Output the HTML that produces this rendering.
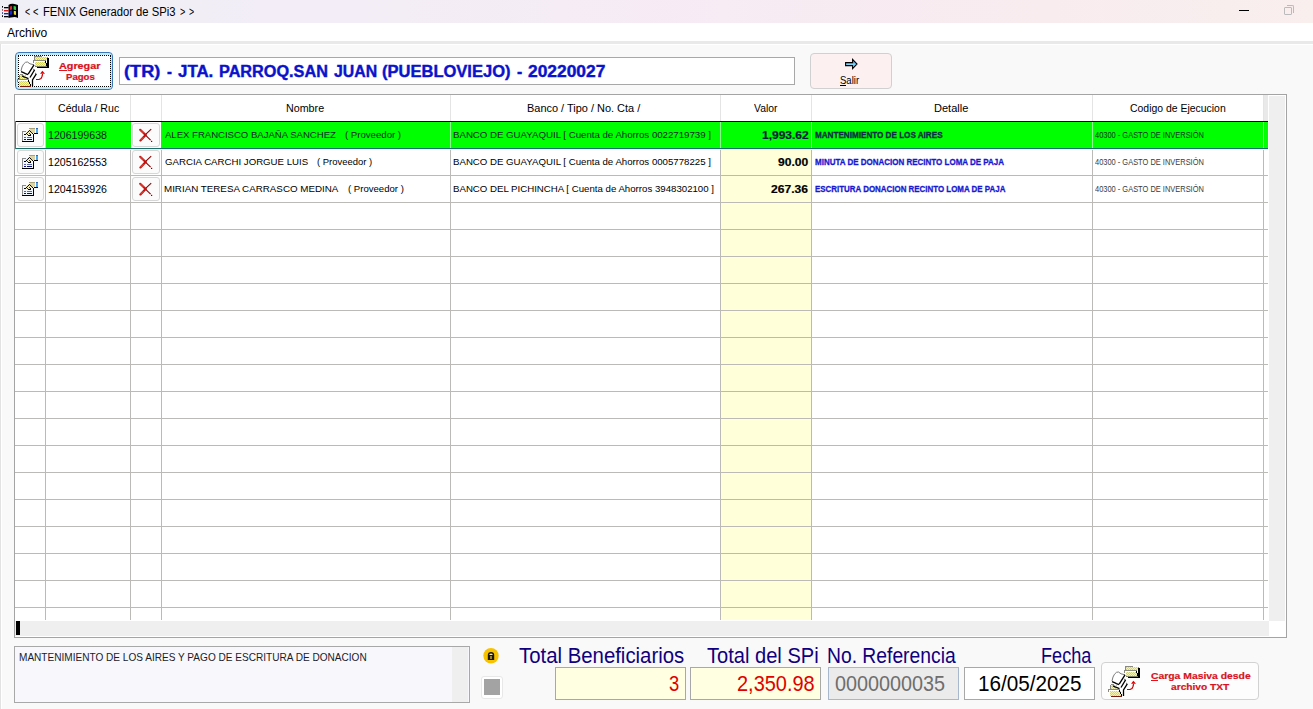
<!DOCTYPE html>
<html><head><meta charset="utf-8">
<style>
*{margin:0;padding:0;box-sizing:border-box}
html,body{width:1313px;height:709px;overflow:hidden;background:#f9f9f9;font-family:"Liberation Sans",sans-serif}
body{position:relative}
.a{position:absolute}
.tx{position:absolute;white-space:nowrap;transform-origin:0 0}
.btn{position:absolute;border:1px solid #d6d6d6;border-radius:3px;background:#fbfbfb}
</style></head><body>
<svg width="0" height="0" style="position:absolute">
<defs>
<pattern id="chk" width="2" height="2" patternUnits="userSpaceOnUse"><rect width="2" height="2" fill="#f4f4b0"/><rect width="1" height="1" fill="#d8d860"/><rect x="1" y="1" width="1" height="1" fill="#d8d860"/></pattern>



</defs></svg>

<!-- title bar -->
<div class="a" style="left:0;top:0;width:1313px;height:23px;background:linear-gradient(90deg,#f0eff6 0%,#f3edf6 30%,#f7ebf4 55%,#f8ecef 80%,#f9efed 100%)"></div>
<svg class="a" style="left:0;top:2px" width="20" height="18" viewBox="0 0 20 18">
 <path d="M8.5 3 Q10.5 1.5 13 1.8 Q15.5 2 18 3 V16 Q15.5 14.8 13 15.2 Q10.5 15.4 8.5 16 Z" fill="#000"/>
 <path d="M9.8 4.5 L12 4 V7.6 L9.8 8 Z" fill="#e02828"/>
 <path d="M13.6 4 L16 4.6 V8.2 L13.6 7.6 Z" fill="#30d040"/>
 <path d="M9.8 8.8 L12.2 8.6 V12.4 L9.8 12.8 Z" fill="#1428d8"/>
 <path d="M13.8 8.8 L16 9.2 V13 L13.8 12.6 Z" fill="#f0e020"/>
 <rect x="2" y="4" width="1" height="1.6" fill="#000"/>
 <rect x="2" y="7.2" width="1" height="1.5" fill="#8a4040"/>
 <rect x="2" y="10.3" width="1" height="1.5" fill="#203090"/>
 <rect x="2" y="13.3" width="1" height="1.6" fill="#000"/>
 <rect x="4" y="5" width="4.6" height="1.3" fill="#000"/>
 <rect x="4" y="8" width="4.6" height="1.4" fill="#d81818"/>
 <rect x="4" y="11" width="4.6" height="1.4" fill="#1424b0"/>
 <rect x="4" y="14" width="4.6" height="1.3" fill="#000"/>
</svg>
<div class="a" style="left:1239px;top:10px;width:10px;height:1px;background:#000"></div>
<div class="a" style="left:1284px;top:7px;width:8px;height:8px;border:1px solid #bbb;border-radius:1px"></div>
<div class="a" style="left:1287px;top:5px;width:7px;height:8px;border-top:1px solid #bbb;border-right:1px solid #bbb;border-radius:0 2px 0 0"></div>
<!-- menu -->
<div class="a" style="left:0;top:23px;width:1313px;height:18px;background:#fff"></div>
<div class="a" style="left:0;top:41px;width:1313px;height:3px;background:#e9e9e9"></div>
<div class="a" style="left:0;top:44px;width:1313px;height:1px;background:#fff"></div>
<div class="a" style="left:0;top:44px;width:1px;height:665px;background:#e2e2e2"></div>
<div class="a" style="left:1px;top:44px;width:1px;height:665px;background:#fff"></div>

<!-- Agregar button -->
<div class="a" style="left:15px;top:52px;width:98px;height:38px;border:1px solid #3a78b8;border-radius:4px;background:#fcfeff;box-shadow:inset 0 0 0 2px #c0eafa"></div>
<div class="a" style="left:18px;top:55px;width:93px;height:32px;border:1px dotted #000"></div>
<svg class="a" style="left:16px;top:54px" width="34" height="34" viewBox="0 0 34 34">
 <g shape-rendering="crispEdges">
 <!-- bottom folder back -->
 <rect x="4" y="20" width="3" height="1" fill="#8a8a80"/>
 <rect x="3" y="21" width="1" height="5" fill="#8a8a80"/>
 <rect x="4" y="21" width="6" height="4" fill="url(#chk)"/>
 </g>
 <!-- papers -->
 <path d="M5 16.5 L6 13 L7.5 10.2 L9.5 8.3 L11.5 8 L14 9.8 L18 10.8 L12.2 20.2 L9.5 19.6 L5 17.6 Z" fill="#fff"/>
 <path d="M12.2 20.2 L18.6 15.8 L20.3 19.8 L16.5 31 L13 26 L8 23.5 Z" fill="#fff"/>
 <path d="M5 17 L6 13 L7.5 10.2 L9.5 8.3 L11.5 8 L14 9.8 L18 10.8" fill="none" stroke="#7a7a7a" stroke-width="1"/>
 <path d="M18 10.8 L12.2 20.2 M5 17.6 L7.5 18.6 L9.5 19.6 L12 20.6" fill="none" stroke="#000" stroke-width="1.3"/>
 <path d="M17 15.2 L18.6 15.8" stroke="#7a7a7a" stroke-width="1"/>
 <path d="M18.6 15.8 L14 23.5" fill="none" stroke="#000" stroke-width="1.3"/>
 <path d="M6 21.8 L8 22.8 L10 23.6 L12.5 24.6" fill="none" stroke="#000" stroke-width="1.3"/>
 <path d="M19 19 L20.3 19.8" stroke="#7a7a7a" stroke-width="1"/>
 <path d="M20.3 19.8 L16.5 26 L16.5 32" fill="none" stroke="#000" stroke-width="1.3"/>
 <g shape-rendering="crispEdges">
 <!-- top right folder -->
 <rect x="31" y="4" width="2" height="10" fill="#000"/>
 <rect x="21" y="13" width="12" height="1" fill="#000"/>
 <rect x="18" y="2" width="8" height="1" fill="#8a8a80"/>
 <rect x="18" y="2" width="1" height="5" fill="#8a8a80"/>
 <rect x="26" y="3" width="6" height="1" fill="#8a8a80"/>
 <rect x="19" y="3" width="12" height="3" fill="url(#chk)"/>
 <rect x="17" y="6" width="13" height="1" fill="#8a8a80"/>
 <rect x="17" y="6" width="1" height="3" fill="#8a8a80"/>
 <rect x="18" y="7" width="11" height="1" fill="#fff"/>
 <rect x="19" y="8" width="11" height="4" fill="url(#chk)"/>
 <rect x="19" y="12" width="12" height="1" fill="#80806a"/>
 <rect x="29" y="7" width="1" height="2" fill="#000"/>
 <rect x="30" y="9" width="1" height="3" fill="#000"/>
 <!-- bottom folder front -->
 <rect x="1" y="25" width="12" height="1" fill="#8a8a80"/>
 <rect x="1" y="25" width="1" height="3" fill="#8a8a80"/>
 <rect x="2" y="26" width="10" height="1" fill="#fff"/>
 <rect x="3" y="27" width="11" height="5" fill="url(#chk)"/>
 <rect x="12" y="26" width="1" height="2" fill="#000"/>
 <rect x="13" y="28" width="1" height="2" fill="#000"/>
 <rect x="14" y="30" width="1" height="3" fill="#000"/>
 <rect x="4" y="32" width="11" height="1" fill="#7a1a10"/>
 </g>
 <!-- red arrow -->
 <path d="M20 25.5 H23 L25 24.5 L26 22.5 L26.6 20" fill="none" stroke="#c80000" stroke-width="1.2"/>
 <path d="M26.4 16.8 L29 19.8 L24 19.8 Z" fill="#e00000"/>
</svg>
<div class="a" style="left:59px;top:70px;width:8px;height:1px;background:#e0141e"></div>

<!-- title textbox -->
<div class="a" style="left:119px;top:57px;width:676px;height:28px;border:1px solid #a8a8a8;background:#fff"></div>

<!-- Salir -->
<div class="a" style="left:810px;top:53px;width:82px;height:36px;border:1px solid #d0d0d0;border-radius:4px;background:#fcf0f0"></div>
<svg class="a" style="left:842px;top:56px" width="18" height="16" viewBox="0 0 18 16">
 <defs><linearGradient id="ag" x1="0" y1="0" x2="0" y2="1"><stop offset="0" stop-color="#3a8ee0"/><stop offset="0.55" stop-color="#7ad4f8"/><stop offset="1" stop-color="#b8f4ff"/></linearGradient></defs>
 <path d="M3.6 6.6 H10.6 V3.4 L15 8 L10.6 12.6 V9.6 H3.6 Z" fill="url(#ag)" stroke="#000" stroke-width="1.1" stroke-linejoin="miter"/>
</svg>
<div class="a" style="left:840px;top:85px;width:6px;height:1px;background:#000"></div>

<!-- GRID -->
<div class="a" style="left:14px;top:94px;width:1273px;height:544px;border:1px solid #a4a4a4;background:#fff"></div>
<div class="a" style="left:721px;top:149px;width:90px;height:471px;background:#ffffda"></div>
<div class="a" style="left:45px;top:95px;width:1px;height:26px;background:#e4e4e4"></div>
<div class="a" style="left:130px;top:95px;width:1px;height:26px;background:#e4e4e4"></div>
<div class="a" style="left:161px;top:95px;width:1px;height:26px;background:#e4e4e4"></div>
<div class="a" style="left:450px;top:95px;width:1px;height:26px;background:#e4e4e4"></div>
<div class="a" style="left:720px;top:95px;width:1px;height:26px;background:#e4e4e4"></div>
<div class="a" style="left:811px;top:95px;width:1px;height:26px;background:#e4e4e4"></div>
<div class="a" style="left:1092px;top:95px;width:1px;height:26px;background:#e4e4e4"></div>
<div class="a" style="left:1263px;top:95px;width:1px;height:26px;background:#e4e4e4"></div>
<div class="a" style="left:1264px;top:95px;width:4px;height:26px;background:#e9e9e9"></div>
<div class="a" style="left:45px;top:121px;width:1px;height:499px;background:#bcbab6"></div>
<div class="a" style="left:130px;top:121px;width:1px;height:499px;background:#bcbab6"></div>
<div class="a" style="left:161px;top:121px;width:1px;height:499px;background:#bcbab6"></div>
<div class="a" style="left:450px;top:121px;width:1px;height:499px;background:#bcbab6"></div>
<div class="a" style="left:720px;top:121px;width:1px;height:499px;background:#bcbab6"></div>
<div class="a" style="left:811px;top:121px;width:1px;height:499px;background:#bcbab6"></div>
<div class="a" style="left:1092px;top:121px;width:1px;height:499px;background:#bcbab6"></div>
<div class="a" style="left:1263px;top:121px;width:1px;height:499px;background:#bcbab6"></div>
<div class="a" style="left:15px;top:148px;width:1253px;height:1px;background:#bcbab6"></div>
<div class="a" style="left:15px;top:175px;width:1253px;height:1px;background:#bcbab6"></div>
<div class="a" style="left:15px;top:202px;width:1253px;height:1px;background:#bcbab6"></div>
<div class="a" style="left:15px;top:229px;width:1253px;height:1px;background:#bcbab6"></div>
<div class="a" style="left:15px;top:256px;width:1253px;height:1px;background:#bcbab6"></div>
<div class="a" style="left:15px;top:283px;width:1253px;height:1px;background:#bcbab6"></div>
<div class="a" style="left:15px;top:310px;width:1253px;height:1px;background:#bcbab6"></div>
<div class="a" style="left:15px;top:337px;width:1253px;height:1px;background:#bcbab6"></div>
<div class="a" style="left:15px;top:364px;width:1253px;height:1px;background:#bcbab6"></div>
<div class="a" style="left:15px;top:391px;width:1253px;height:1px;background:#bcbab6"></div>
<div class="a" style="left:15px;top:418px;width:1253px;height:1px;background:#bcbab6"></div>
<div class="a" style="left:15px;top:445px;width:1253px;height:1px;background:#bcbab6"></div>
<div class="a" style="left:15px;top:472px;width:1253px;height:1px;background:#bcbab6"></div>
<div class="a" style="left:15px;top:499px;width:1253px;height:1px;background:#bcbab6"></div>
<div class="a" style="left:15px;top:526px;width:1253px;height:1px;background:#bcbab6"></div>
<div class="a" style="left:15px;top:553px;width:1253px;height:1px;background:#bcbab6"></div>
<div class="a" style="left:15px;top:580px;width:1253px;height:1px;background:#bcbab6"></div>
<div class="a" style="left:15px;top:607px;width:1253px;height:1px;background:#bcbab6"></div>
<div class="a" style="left:15px;top:122px;width:1253px;height:26px;background:#00ff00"></div>
<div class="a" style="left:15px;top:121px;width:1253px;height:1px;background:#000"></div>
<div class="a" style="left:15px;top:148px;width:1253px;height:1px;background:#1a6e6a"></div>
<div class="a" style="left:15px;top:121px;width:1px;height:28px;background:#3c78b4"></div>
<div class="a" style="left:450px;top:122px;width:1px;height:26px;background:#90f890"></div>
<div class="a" style="left:720px;top:122px;width:1px;height:26px;background:#90f890"></div>
<div class="a" style="left:811px;top:122px;width:1px;height:26px;background:#90f890"></div>
<div class="a" style="left:1092px;top:122px;width:1px;height:26px;background:#90f890"></div>
<div class="a" style="left:1263px;top:122px;width:1px;height:26px;background:#90f890"></div>
<div class="a" style="left:45px;top:122px;width:1px;height:26px;background:#c8dcc8"></div>
<div class="a" style="left:15px;top:149px;width:1253px;height:1px;background:#e4f2f6"></div>
<div class="a" style="left:16px;top:122px;width:29px;height:26px;background:#fff"></div>
<div class="a" style="left:131px;top:122px;width:30px;height:26px;background:#fff"></div>
<div class="btn" style="left:17px;top:123px;width:27px;height:24px"></div>
<div class="btn" style="left:132px;top:123px;width:28px;height:24px"></div>
<svg class="a" style="left:21px;top:127px" width="17" height="16" viewBox="0 0 17 16">
 <g shape-rendering="crispEdges">
 <rect x="1" y="4" width="11" height="10" fill="#f2f8ff"/>
 <rect x="1" y="4" width="4" height="1" fill="#8c8c8c"/>
 <rect x="1" y="4" width="1" height="10" fill="#8c8c8c"/>
 <rect x="1" y="14" width="12" height="1" fill="#000"/>
 <rect x="12" y="7" width="1" height="8" fill="#000"/>
 <rect x="3" y="10" width="2" height="1" fill="#5a5ab0"/>
 <rect x="6" y="10" width="5" height="1" fill="#5a6aa8"/>
 <rect x="3" y="12" width="2" height="1" fill="#0c0c78"/>
 <rect x="6" y="12" width="5" height="1" fill="#0c0c78"/>
 <rect x="8" y="1" width="6" height="1" fill="#a8a078"/>
 <rect x="9" y="2" width="5" height="4" fill="#dcd4a4"/>
 <rect x="15" y="1" width="2" height="5" fill="#4aa8ec"/>
 <rect x="15" y="1" width="2" height="1" fill="#2a6ab8"/>
 <rect x="13" y="6" width="4" height="1" fill="#000"/>
 <path fill="#f0ecc0" d="M3 7.5 L8 2.5 L12 6 L9 8.5 Z"/>
 <rect x="3" y="7" width="2" height="1" fill="#000"/>
 <rect x="5" y="6" width="1" height="1" fill="#000"/><rect x="6" y="5" width="1" height="1" fill="#222"/>
 <rect x="7" y="4" width="1" height="1" fill="#000"/><rect x="8" y="3" width="1" height="1" fill="#222"/>
 <rect x="9" y="4" width="1" height="1" fill="#000"/><rect x="10" y="5" width="1" height="1" fill="#222"/>
 <rect x="11" y="6" width="1" height="1" fill="#000"/>
 <rect x="6" y="7" width="1" height="1" fill="#333"/><rect x="8" y="6" width="1" height="1" fill="#333"/>
 <rect x="7" y="8" width="1" height="1" fill="#000"/><rect x="9" y="7" width="1" height="1" fill="#000"/>
 <rect x="8" y="8" width="2" height="1" fill="#000"/>
 </g>
</svg>
<svg class="a" style="left:138px;top:128px" width="15" height="14" viewBox="0 0 15 14">
 <path d="M7.2 6.8 L12.6 12.2" stroke="#8a0000" stroke-width="1.1"/>
 <rect x="13" y="12.8" width="1.2" height="1.2" fill="#7a0000"/>
 <path d="M7.4 6.6 L13.2 1.2" stroke="#8a0000" stroke-width="1.1"/>
 <path d="M2.2 1.8 L7.6 7" stroke="#c01010" stroke-width="2.2" stroke-linecap="round"/>
 <path d="M7.6 7 L2.4 12.4" stroke="#c01010" stroke-width="2.2" stroke-linecap="round"/>
 <path d="M2.4 1.9 L5.5 5" stroke="#ff6a4a" stroke-width="0.8" stroke-linecap="round"/>
 <path d="M2.6 12 L5.2 9.4" stroke="#ff6a4a" stroke-width="0.8" stroke-linecap="round"/>
</svg>
<div class="btn" style="left:17px;top:150px;width:27px;height:24px"></div>
<div class="btn" style="left:132px;top:150px;width:28px;height:24px"></div>
<svg class="a" style="left:21px;top:154px" width="17" height="16" viewBox="0 0 17 16">
 <g shape-rendering="crispEdges">
 <rect x="1" y="4" width="11" height="10" fill="#f2f8ff"/>
 <rect x="1" y="4" width="4" height="1" fill="#8c8c8c"/>
 <rect x="1" y="4" width="1" height="10" fill="#8c8c8c"/>
 <rect x="1" y="14" width="12" height="1" fill="#000"/>
 <rect x="12" y="7" width="1" height="8" fill="#000"/>
 <rect x="3" y="10" width="2" height="1" fill="#5a5ab0"/>
 <rect x="6" y="10" width="5" height="1" fill="#5a6aa8"/>
 <rect x="3" y="12" width="2" height="1" fill="#0c0c78"/>
 <rect x="6" y="12" width="5" height="1" fill="#0c0c78"/>
 <rect x="8" y="1" width="6" height="1" fill="#a8a078"/>
 <rect x="9" y="2" width="5" height="4" fill="#dcd4a4"/>
 <rect x="15" y="1" width="2" height="5" fill="#4aa8ec"/>
 <rect x="15" y="1" width="2" height="1" fill="#2a6ab8"/>
 <rect x="13" y="6" width="4" height="1" fill="#000"/>
 <path fill="#f0ecc0" d="M3 7.5 L8 2.5 L12 6 L9 8.5 Z"/>
 <rect x="3" y="7" width="2" height="1" fill="#000"/>
 <rect x="5" y="6" width="1" height="1" fill="#000"/><rect x="6" y="5" width="1" height="1" fill="#222"/>
 <rect x="7" y="4" width="1" height="1" fill="#000"/><rect x="8" y="3" width="1" height="1" fill="#222"/>
 <rect x="9" y="4" width="1" height="1" fill="#000"/><rect x="10" y="5" width="1" height="1" fill="#222"/>
 <rect x="11" y="6" width="1" height="1" fill="#000"/>
 <rect x="6" y="7" width="1" height="1" fill="#333"/><rect x="8" y="6" width="1" height="1" fill="#333"/>
 <rect x="7" y="8" width="1" height="1" fill="#000"/><rect x="9" y="7" width="1" height="1" fill="#000"/>
 <rect x="8" y="8" width="2" height="1" fill="#000"/>
 </g>
</svg>
<svg class="a" style="left:138px;top:155px" width="15" height="14" viewBox="0 0 15 14">
 <path d="M7.2 6.8 L12.6 12.2" stroke="#8a0000" stroke-width="1.1"/>
 <rect x="13" y="12.8" width="1.2" height="1.2" fill="#7a0000"/>
 <path d="M7.4 6.6 L13.2 1.2" stroke="#8a0000" stroke-width="1.1"/>
 <path d="M2.2 1.8 L7.6 7" stroke="#c01010" stroke-width="2.2" stroke-linecap="round"/>
 <path d="M7.6 7 L2.4 12.4" stroke="#c01010" stroke-width="2.2" stroke-linecap="round"/>
 <path d="M2.4 1.9 L5.5 5" stroke="#ff6a4a" stroke-width="0.8" stroke-linecap="round"/>
 <path d="M2.6 12 L5.2 9.4" stroke="#ff6a4a" stroke-width="0.8" stroke-linecap="round"/>
</svg>
<div class="btn" style="left:17px;top:177px;width:27px;height:24px"></div>
<div class="btn" style="left:132px;top:177px;width:28px;height:24px"></div>
<svg class="a" style="left:21px;top:181px" width="17" height="16" viewBox="0 0 17 16">
 <g shape-rendering="crispEdges">
 <rect x="1" y="4" width="11" height="10" fill="#f2f8ff"/>
 <rect x="1" y="4" width="4" height="1" fill="#8c8c8c"/>
 <rect x="1" y="4" width="1" height="10" fill="#8c8c8c"/>
 <rect x="1" y="14" width="12" height="1" fill="#000"/>
 <rect x="12" y="7" width="1" height="8" fill="#000"/>
 <rect x="3" y="10" width="2" height="1" fill="#5a5ab0"/>
 <rect x="6" y="10" width="5" height="1" fill="#5a6aa8"/>
 <rect x="3" y="12" width="2" height="1" fill="#0c0c78"/>
 <rect x="6" y="12" width="5" height="1" fill="#0c0c78"/>
 <rect x="8" y="1" width="6" height="1" fill="#a8a078"/>
 <rect x="9" y="2" width="5" height="4" fill="#dcd4a4"/>
 <rect x="15" y="1" width="2" height="5" fill="#4aa8ec"/>
 <rect x="15" y="1" width="2" height="1" fill="#2a6ab8"/>
 <rect x="13" y="6" width="4" height="1" fill="#000"/>
 <path fill="#f0ecc0" d="M3 7.5 L8 2.5 L12 6 L9 8.5 Z"/>
 <rect x="3" y="7" width="2" height="1" fill="#000"/>
 <rect x="5" y="6" width="1" height="1" fill="#000"/><rect x="6" y="5" width="1" height="1" fill="#222"/>
 <rect x="7" y="4" width="1" height="1" fill="#000"/><rect x="8" y="3" width="1" height="1" fill="#222"/>
 <rect x="9" y="4" width="1" height="1" fill="#000"/><rect x="10" y="5" width="1" height="1" fill="#222"/>
 <rect x="11" y="6" width="1" height="1" fill="#000"/>
 <rect x="6" y="7" width="1" height="1" fill="#333"/><rect x="8" y="6" width="1" height="1" fill="#333"/>
 <rect x="7" y="8" width="1" height="1" fill="#000"/><rect x="9" y="7" width="1" height="1" fill="#000"/>
 <rect x="8" y="8" width="2" height="1" fill="#000"/>
 </g>
</svg>
<svg class="a" style="left:138px;top:182px" width="15" height="14" viewBox="0 0 15 14">
 <path d="M7.2 6.8 L12.6 12.2" stroke="#8a0000" stroke-width="1.1"/>
 <rect x="13" y="12.8" width="1.2" height="1.2" fill="#7a0000"/>
 <path d="M7.4 6.6 L13.2 1.2" stroke="#8a0000" stroke-width="1.1"/>
 <path d="M2.2 1.8 L7.6 7" stroke="#c01010" stroke-width="2.2" stroke-linecap="round"/>
 <path d="M7.6 7 L2.4 12.4" stroke="#c01010" stroke-width="2.2" stroke-linecap="round"/>
 <path d="M2.4 1.9 L5.5 5" stroke="#ff6a4a" stroke-width="0.8" stroke-linecap="round"/>
 <path d="M2.6 12 L5.2 9.4" stroke="#ff6a4a" stroke-width="0.8" stroke-linecap="round"/>
</svg>
<div class="a" style="left:1269px;top:96px;width:16px;height:525px;background:#efefef"></div>
<div class="a" style="left:15px;top:621px;width:1254px;height:15px;background:#efefef"></div>
<div class="a" style="left:16px;top:621px;width:4px;height:14px;background:#000"></div>

<!-- bottom description -->
<div class="a" style="left:14px;top:646px;width:456px;height:57px;border:1px solid #a8a8a8;background:#f8f8fc"></div>
<div class="a" style="left:452px;top:647px;width:16px;height:55px;background:#efefef"></div>
<!-- lock -->
<svg class="a" style="left:482px;top:647px" width="18" height="18" viewBox="0 0 18 18">
 <circle cx="9" cy="8.7" r="7.7" fill="#f7c300"/>
 <path d="M5.8 13 V8 Q5.8 5 9 5 Q12.2 5 12.2 8 V13 Z" fill="#1e1800"/>
 <path d="M7.2 8 Q7.4 6.4 9 6.4 Q10.6 6.4 10.8 8 Z" fill="#f4eec0"/>
 <rect x="8.3" y="9" width="1.4" height="3" fill="#c8b050"/>
</svg>
<div class="a" style="left:481px;top:676px;width:22px;height:23px;border:1px solid #e8e8e8;border-radius:3px;background:#fff"></div>
<div class="a" style="left:484px;top:679px;width:16px;height:16px;background:#a3a3a3"></div>
<!-- fields -->
<div class="a" style="left:555px;top:667px;width:131px;height:33px;border:1px solid #a8a8a8;background:#ffffe1"></div>
<div class="a" style="left:690px;top:667px;width:131px;height:33px;border:1px solid #a8a8a8;background:#ffffe1"></div>
<div class="a" style="left:828px;top:667px;width:131px;height:33px;border:1px solid #a8b8cc;background:#ebebeb"></div>
<div class="a" style="left:964px;top:667px;width:131px;height:33px;border:1px solid #a8a8a8;background:#fff"></div>
<!-- Carga masiva -->
<div class="a" style="left:1101px;top:662px;width:158px;height:38px;border:1px solid #d2d2d2;border-radius:4px;background:#fdfdfd"></div>
<svg class="a" style="left:1107px;top:664px" width="34" height="34" viewBox="0 0 34 34">
 <g shape-rendering="crispEdges">
 <!-- bottom folder back -->
 <rect x="4" y="20" width="3" height="1" fill="#8a8a80"/>
 <rect x="3" y="21" width="1" height="5" fill="#8a8a80"/>
 <rect x="4" y="21" width="6" height="4" fill="url(#chk)"/>
 </g>
 <!-- papers -->
 <path d="M5 16.5 L6 13 L7.5 10.2 L9.5 8.3 L11.5 8 L14 9.8 L18 10.8 L12.2 20.2 L9.5 19.6 L5 17.6 Z" fill="#fff"/>
 <path d="M12.2 20.2 L18.6 15.8 L20.3 19.8 L16.5 31 L13 26 L8 23.5 Z" fill="#fff"/>
 <path d="M5 17 L6 13 L7.5 10.2 L9.5 8.3 L11.5 8 L14 9.8 L18 10.8" fill="none" stroke="#7a7a7a" stroke-width="1"/>
 <path d="M18 10.8 L12.2 20.2 M5 17.6 L7.5 18.6 L9.5 19.6 L12 20.6" fill="none" stroke="#000" stroke-width="1.3"/>
 <path d="M17 15.2 L18.6 15.8" stroke="#7a7a7a" stroke-width="1"/>
 <path d="M18.6 15.8 L14 23.5" fill="none" stroke="#000" stroke-width="1.3"/>
 <path d="M6 21.8 L8 22.8 L10 23.6 L12.5 24.6" fill="none" stroke="#000" stroke-width="1.3"/>
 <path d="M19 19 L20.3 19.8" stroke="#7a7a7a" stroke-width="1"/>
 <path d="M20.3 19.8 L16.5 26 L16.5 32" fill="none" stroke="#000" stroke-width="1.3"/>
 <g shape-rendering="crispEdges">
 <!-- top right folder -->
 <rect x="31" y="4" width="2" height="10" fill="#000"/>
 <rect x="21" y="13" width="12" height="1" fill="#000"/>
 <rect x="18" y="2" width="8" height="1" fill="#8a8a80"/>
 <rect x="18" y="2" width="1" height="5" fill="#8a8a80"/>
 <rect x="26" y="3" width="6" height="1" fill="#8a8a80"/>
 <rect x="19" y="3" width="12" height="3" fill="url(#chk)"/>
 <rect x="17" y="6" width="13" height="1" fill="#8a8a80"/>
 <rect x="17" y="6" width="1" height="3" fill="#8a8a80"/>
 <rect x="18" y="7" width="11" height="1" fill="#fff"/>
 <rect x="19" y="8" width="11" height="4" fill="url(#chk)"/>
 <rect x="19" y="12" width="12" height="1" fill="#80806a"/>
 <rect x="29" y="7" width="1" height="2" fill="#000"/>
 <rect x="30" y="9" width="1" height="3" fill="#000"/>
 <!-- bottom folder front -->
 <rect x="1" y="25" width="12" height="1" fill="#8a8a80"/>
 <rect x="1" y="25" width="1" height="3" fill="#8a8a80"/>
 <rect x="2" y="26" width="10" height="1" fill="#fff"/>
 <rect x="3" y="27" width="11" height="5" fill="url(#chk)"/>
 <rect x="12" y="26" width="1" height="2" fill="#000"/>
 <rect x="13" y="28" width="1" height="2" fill="#000"/>
 <rect x="14" y="30" width="1" height="3" fill="#000"/>
 <rect x="4" y="32" width="11" height="1" fill="#7a1a10"/>
 </g>
 <!-- red arrow -->
 <path d="M20 25.5 H23 L25 24.5 L26 22.5 L26.6 20" fill="none" stroke="#c80000" stroke-width="1.2"/>
 <path d="M26.4 16.8 L29 19.8 L24 19.8 Z" fill="#e00000"/>
</svg>
<div class="a" style="left:1151px;top:680px;width:7px;height:1px;background:#e0141e"></div>

<div class="tx" style="left:24.80px;top:6.00px;font-size:12px;line-height:12px;font-weight:normal;color:#000;transform:scale(0.7286,1.0);">&lt;</div>
<div class="tx" style="left:32.80px;top:6.00px;font-size:12px;line-height:12px;font-weight:normal;color:#000;transform:scale(0.7714,1.0);">&lt;</div>
<div class="tx" style="left:42.76px;top:6.00px;font-size:12px;line-height:12px;font-weight:normal;color:#000;transform:scale(0.9364,1.0);">FENIX Generador de SPi3</div>
<div class="tx" style="left:180.10px;top:6.00px;font-size:12px;line-height:12px;font-weight:normal;color:#000;transform:scale(0.7571,1.0);">&gt;</div>
<div class="tx" style="left:188.60px;top:6.00px;font-size:12px;line-height:12px;font-weight:normal;color:#000;transform:scale(0.7286,1.0);">&gt;</div>
<div class="tx" style="left:7.30px;top:27.00px;font-size:12px;line-height:12px;font-weight:normal;color:#000;transform:scale(1.0050,1.0);">Archivo</div>
<div class="tx" style="left:123.86px;top:64.00px;font-size:16px;line-height:16px;font-weight:bold;color:#0a12cc;transform:scale(1.1355,1.0);-webkit-text-stroke:0.4px #0a12cc;">(TR)</div>
<div class="tx" style="left:166.90px;top:64.00px;font-size:16px;line-height:16px;font-weight:bold;color:#0a12cc;transform:scale(0.9200,1.0);-webkit-text-stroke:0.4px #0a12cc;">-</div>
<div class="tx" style="left:178.20px;top:64.00px;font-size:16px;line-height:16px;font-weight:bold;color:#0a12cc;transform:scale(1.0545,1.0);-webkit-text-stroke:0.4px #0a12cc;">JTA.</div>
<div class="tx" style="left:219.48px;top:64.00px;font-size:16px;line-height:16px;font-weight:bold;color:#0a12cc;transform:scale(1.0151,1.0);-webkit-text-stroke:0.4px #0a12cc;">PARROQ.SAN</div>
<div class="tx" style="left:334.30px;top:64.00px;font-size:16px;line-height:16px;font-weight:bold;color:#0a12cc;transform:scale(0.9884,1.0);-webkit-text-stroke:0.4px #0a12cc;">JUAN</div>
<div class="tx" style="left:382.47px;top:64.00px;font-size:16px;line-height:16px;font-weight:bold;color:#0a12cc;transform:scale(1.0325,1.0);-webkit-text-stroke:0.4px #0a12cc;">(PUEBLOVIEJO)</div>
<div class="tx" style="left:516.60px;top:64.00px;font-size:16px;line-height:16px;font-weight:bold;color:#0a12cc;transform:scale(0.9800,1.0);-webkit-text-stroke:0.4px #0a12cc;">-</div>
<div class="tx" style="left:528.00px;top:64.00px;font-size:16px;line-height:16px;font-weight:bold;color:#0a12cc;transform:scale(1.0859,1.0);-webkit-text-stroke:0.4px #0a12cc;">20220027</div>
<div class="tx" style="left:59.00px;top:62.00px;font-size:10px;line-height:10px;font-weight:bold;color:#d8121e;transform:scale(1.0795,0.875);-webkit-text-stroke:0.25px #d8121e;">Agregar</div>
<div class="tx" style="left:66.00px;top:73.00px;font-size:10px;line-height:10px;font-weight:bold;color:#d8121e;transform:scale(0.9600,0.875);-webkit-text-stroke:0.25px #d8121e;">Pagos</div>
<div class="tx" style="left:839.90px;top:75.00px;font-size:10.5px;line-height:10.5px;font-weight:normal;color:#000;transform:scale(0.9095,1.0);">Salir</div>
<div class="tx" style="left:57.60px;top:103.00px;font-size:11px;line-height:11px;font-weight:normal;color:#000;transform:scale(0.9619,1.0);">Cédula / Ruc</div>
<div class="tx" style="left:286.43px;top:103.00px;font-size:11px;line-height:11px;font-weight:normal;color:#000;transform:scale(0.9737,1.0);">Nombre</div>
<div class="tx" style="left:526.50px;top:103.00px;font-size:11px;line-height:11px;font-weight:normal;color:#000;transform:scale(0.9956,1.0);">Banco / Tipo / No. Cta /</div>
<div class="tx" style="left:753.50px;top:103.00px;font-size:11px;line-height:11px;font-weight:normal;color:#000;transform:scale(0.9400,1.0);">Valor</div>
<div class="tx" style="left:934.30px;top:103.00px;font-size:11px;line-height:11px;font-weight:normal;color:#000;transform:scale(1.0030,1.0);">Detalle</div>
<div class="tx" style="left:1129.70px;top:103.00px;font-size:11px;line-height:11px;font-weight:normal;color:#000;transform:scale(0.9485,1.0);">Codigo de Ejecucion</div>
<div class="tx" style="left:48.34px;top:130.00px;font-size:11px;line-height:11px;font-weight:normal;color:#0a2424;transform:scale(0.9633,1.0);">1206199638</div>
<div class="tx" style="left:165.00px;top:131.00px;font-size:10px;line-height:10px;font-weight:normal;color:#0a2424;transform:scale(0.9547,0.875);">ALEX FRANCISCO BAJAÑA SANCHEZ</div>
<div class="tx" style="left:344.60px;top:131.00px;font-size:10px;line-height:10px;font-weight:normal;color:#0a2424;transform:scale(0.9603,0.875);">( Proveedor )</div>
<div class="tx" style="left:452.83px;top:131.00px;font-size:10px;line-height:10px;font-weight:normal;color:#0a2424;transform:scale(0.9654,0.875);">BANCO DE GUAYAQUIL [ Cuenta de Ahorros 0022719739 ]</div>
<div class="tx" style="left:761.90px;top:130.00px;font-size:11px;line-height:11px;font-weight:bold;color:#0a1a40;transform:scale(1.0884,1.0);-webkit-text-stroke:0.2px #0a1a40;">1,993.62</div>
<div class="tx" style="left:814.80px;top:131.00px;font-size:9px;line-height:9px;font-weight:bold;color:#0a2a48;transform:scale(0.9014,1.0);-webkit-text-stroke:0.3px #0a2a48;">MANTENIMIENTO DE LOS AIRES</div>
<div class="tx" style="left:1095.00px;top:131.00px;font-size:8.5px;line-height:8.5px;font-weight:normal;color:#0a3020;transform:scale(0.8774,1.0);">40300 - GASTO DE INVERSIÓN</div>
<div class="tx" style="left:48.34px;top:157.00px;font-size:11px;line-height:11px;font-weight:normal;color:#000;transform:scale(0.9633,1.0);">1205162553</div>
<div class="tx" style="left:164.60px;top:158.00px;font-size:10px;line-height:10px;font-weight:normal;color:#000;transform:scale(0.9649,0.875);">GARCIA CARCHI JORGUE LUIS</div>
<div class="tx" style="left:317.20px;top:158.00px;font-size:10px;line-height:10px;font-weight:normal;color:#000;transform:scale(0.9448,0.875);">( Proveedor )</div>
<div class="tx" style="left:452.83px;top:158.00px;font-size:10px;line-height:10px;font-weight:normal;color:#000;transform:scale(0.9654,0.875);">BANCO DE GUAYAQUIL [ Cuenta de Ahorros 0005778225 ]</div>
<div class="tx" style="left:778.00px;top:157.00px;font-size:11px;line-height:11px;font-weight:bold;color:#000;transform:scale(1.0964,1.0);-webkit-text-stroke:0.2px #000;">90.00</div>
<div class="tx" style="left:814.80px;top:158.00px;font-size:9px;line-height:9px;font-weight:bold;color:#1818d0;transform:scale(0.8883,1.0);-webkit-text-stroke:0.3px #1818d0;">MINUTA DE DONACION RECINTO LOMA DE PAJA</div>
<div class="tx" style="left:1095.00px;top:158.00px;font-size:8.5px;line-height:8.5px;font-weight:normal;color:#3a3a3a;transform:scale(0.8774,1.0);">40300 - GASTO DE INVERSIÓN</div>
<div class="tx" style="left:48.34px;top:184.00px;font-size:11px;line-height:11px;font-weight:normal;color:#000;transform:scale(0.9633,1.0);">1204153926</div>
<div class="tx" style="left:163.62px;top:185.00px;font-size:10px;line-height:10px;font-weight:normal;color:#000;transform:scale(0.9785,0.875);">MIRIAN TERESA CARRASCO MEDINA</div>
<div class="tx" style="left:347.80px;top:185.00px;font-size:10px;line-height:10px;font-weight:normal;color:#000;transform:scale(0.9569,0.875);">( Proveedor )</div>
<div class="tx" style="left:452.83px;top:185.00px;font-size:10px;line-height:10px;font-weight:normal;color:#000;transform:scale(0.9654,0.875);">BANCO DEL PICHINCHA [ Cuenta de Ahorros 3948302100 ]</div>
<div class="tx" style="left:771.40px;top:184.00px;font-size:11px;line-height:11px;font-weight:bold;color:#000;transform:scale(1.0971,1.0);-webkit-text-stroke:0.2px #000;">267.36</div>
<div class="tx" style="left:814.80px;top:185.00px;font-size:9px;line-height:9px;font-weight:bold;color:#1818d0;transform:scale(0.8815,1.0);-webkit-text-stroke:0.3px #1818d0;">ESCRITURA DONACION RECINTO LOMA DE PAJA</div>
<div class="tx" style="left:1095.00px;top:185.00px;font-size:8.5px;line-height:8.5px;font-weight:normal;color:#3a3a3a;transform:scale(0.8774,1.0);">40300 - GASTO DE INVERSIÓN</div>
<div class="tx" style="left:18.68px;top:652.00px;font-size:11px;line-height:11px;font-weight:normal;color:#1a1a2a;transform:scale(0.9151,1.0);">MANTENIMIENTO DE LOS AIRES Y PAGO DE ESCRITURA DE DONACION</div>
<div class="tx" style="left:519.30px;top:645.00px;font-size:22px;line-height:22px;font-weight:normal;color:#10007e;transform:scale(0.9253,1.0);">Total Beneficiarios</div>
<div class="tx" style="left:707.30px;top:645.00px;font-size:22px;line-height:22px;font-weight:normal;color:#10007e;transform:scale(0.9132,1.0);">Total del SPi</div>
<div class="tx" style="left:827.12px;top:645.00px;font-size:22px;line-height:22px;font-weight:normal;color:#10007e;transform:scale(0.8767,1.0);">No. Referencia</div>
<div class="tx" style="left:1040.98px;top:645.00px;font-size:22px;line-height:22px;font-weight:normal;color:#10007e;transform:scale(0.8230,1.0);">Fecha</div>
<div class="tx" style="left:668.86px;top:673.00px;font-size:22px;line-height:22px;font-weight:normal;color:#e00000;transform:scale(0.8364,1.0);">3</div>
<div class="tx" style="left:736.89px;top:673.00px;font-size:22px;line-height:22px;font-weight:normal;color:#e00000;transform:scale(0.9071,1.0);">2,350.98</div>
<div class="tx" style="left:834.50px;top:673.00px;font-size:22px;line-height:22px;font-weight:normal;color:#6e6e6e;transform:scale(0.9000,1.0);">0000000035</div>
<div class="tx" style="left:977.66px;top:673.00px;font-size:22px;line-height:22px;font-weight:normal;color:#000;transform:scale(0.9407,1.0);">16/05/2025</div>
<div class="tx" style="left:1151.30px;top:672.00px;font-size:10px;line-height:10px;font-weight:bold;color:#d8121e;transform:scale(1.0365,0.875);-webkit-text-stroke:0.2px #d8121e;">Carga Masiva desde</div>
<div class="tx" style="left:1171.30px;top:683.00px;font-size:10px;line-height:10px;font-weight:bold;color:#d8121e;transform:scale(1.0190,0.875);-webkit-text-stroke:0.2px #d8121e;">archivo TXT</div>
</body></html>
